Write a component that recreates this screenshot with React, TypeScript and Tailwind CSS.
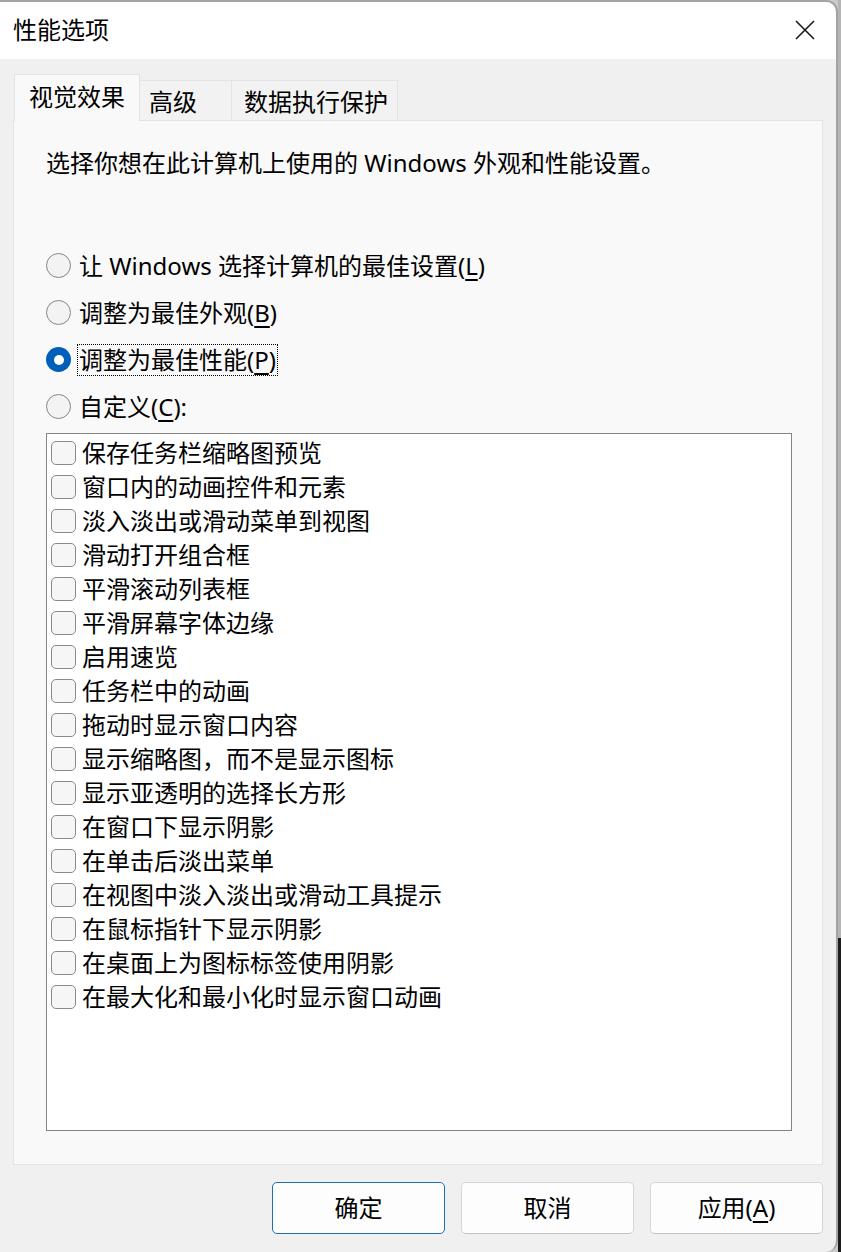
import React from "react";

const items = [
  "保存任务栏缩略图预览",
  "窗口内的动画控件和元素",
  "淡入淡出或滑动菜单到视图",
  "滑动打开组合框",
  "平滑滚动列表框",
  "平滑屏幕字体边缘",
  "启用速览",
  "任务栏中的动画",
  "拖动时显示窗口内容",
  "显示缩略图，而不是显示图标",
  "显示亚透明的选择长方形",
  "在窗口下显示阴影",
  "在单击后淡出菜单",
  "在视图中淡入淡出或滑动工具提示",
  "在鼠标指针下显示阴影",
  "在桌面上为图标标签使用阴影",
  "在最大化和最小化时显示窗口动画",
];

function U({ children }: { children: React.ReactNode }) {
  return <span className="underline underline-offset-[4px] decoration-[1.5px]">{children}</span>;
}

function Radio({ checked, children, focus }: { checked?: boolean; children: React.ReactNode; focus?: boolean }) {
  return (
    <div className="h-[47px] flex items-center">
      {checked ? (
        <div className="w-[25px] h-[25px] rounded-full bg-[#005fb8] flex items-center justify-center shrink-0">
          <div className="w-[10px] h-[10px] rounded-full bg-white" />
        </div>
      ) : (
        <div className="w-[25px] h-[25px] rounded-full border-[1.5px] border-[#858585] bg-[#f3f3f3] shrink-0" />
      )}
      <div
        className={
          focus
            ? "ml-[6px] px-[1px] h-[32px] flex items-center border border-dotted border-black leading-[30px]"
            : "ml-[8px] h-[32px] flex items-center leading-[30px]"
        }
      >
        {children}
      </div>
    </div>
  );
}

export default function App() {
  return (
    <div className="w-[841px] h-[1252px] flex overflow-hidden bg-[#c9c9c9] text-[24px] text-black font-['Noto_Sans','Noto_Sans_CJK_SC',sans-serif]">
      <div className="w-[838px] h-full flex flex-col bg-[#f0f0f0] border-t-2 border-r-2 border-[#a3a3a3] rounded-tr-[12px] rounded-br-[12px] overflow-hidden shrink-0">
        {/* title bar */}
        <div className="h-[57px] bg-white flex items-center justify-between pl-[13px] pr-[21px] shrink-0">
          <div className="leading-[30px] -mt-[1px]">性能选项</div>
          <svg width="20" height="20" viewBox="0 0 20 20" className="-mt-[2px]">
            <path d="M1 1 L19 19 M19 1 L1 19" stroke="#1a1a1a" strokeWidth="1.6" fill="none" />
          </svg>
        </div>

        {/* body */}
        <div className="flex-1 flex flex-col px-[13px] pt-[16px]">
          {/* tabs */}
          <div className="flex items-end h-[46px] relative z-10 -mb-px">
            <div className="ml-px w-[126px] h-[47px] bg-[#f9f9f9] border-t border-l border-r border-[#e3e3e3] flex items-center pl-[14px] leading-[30px] pb-[2px]">
              视觉效果
            </div>
            <div className="w-[92px] h-[41px] bg-[#f2f2f2] border-t border-r border-b border-[#e3e3e3] flex items-center pl-[9px] leading-[30px] pt-[2px]">
              高级
            </div>
            <div className="w-[166px] h-[41px] bg-[#f2f2f2] border-t border-r border-b border-[#e3e3e3] flex items-center pl-[12px] leading-[30px] pt-[2px]">
              数据执行保护
            </div>
          </div>

          {/* panel */}
          <div className="h-[1045px] bg-[#f9f9f9] border border-[#e3e3e3] flex flex-col pl-[32px] pt-[26px] shrink-0">
            <div className="h-[32px] leading-[32px]">选择你想在此计算机上使用的 Windows 外观和性能设置。</div>

            <div className="mt-[63px] flex flex-col">
              <Radio>
                让 Windows 选择计算机的最佳设置(<U>L</U>)
              </Radio>
              <Radio>
                调整为最佳外观(<U>B</U>)
              </Radio>
              <Radio checked focus>
                调整为最佳性能(<U>P</U>)
              </Radio>
              <Radio>
                自定义(<U>C</U>):
              </Radio>
            </div>

            <div className="mt-[3px] w-[746px] h-[698px] bg-white border border-[#858585] pt-[2px] pl-[4px] flex flex-col">
              {items.map((t) => (
                <div key={t} className="h-[34px] flex items-center shrink-0">
                  <div className="w-[25px] h-[24px] rounded-[5px] border border-[#8a8a8a] bg-[#f6f6f6] shrink-0" />
                  <div className="ml-[6px] leading-[30px]">{t}</div>
                </div>
              ))}
            </div>
          </div>

          {/* buttons */}
          <div className="flex justify-end gap-[16px] mt-[17px]">
            <div className="w-[173px] h-[52px] rounded-[5px] border-[1.5px] border-[#1e6fb3] bg-[#fdfdfd] flex items-center justify-center leading-[30px]">
              确定
            </div>
            <div className="w-[173px] h-[52px] rounded-[5px] border border-[#d6d6d6] border-b-[#c2c2c2] bg-[#fdfdfd] flex items-center justify-center leading-[30px]">
              取消
            </div>
            <div className="w-[173px] h-[52px] rounded-[5px] border border-[#d6d6d6] border-b-[#c2c2c2] bg-[#fdfdfd] flex items-center justify-center leading-[30px]">
              应用(<U>A</U>)
            </div>
          </div>
        </div>
      </div>
      <div className="flex-1 flex flex-col">
        <div className="h-[938px] bg-[#b5b5b5]" />
        <div className="flex-1 bg-[#1c1c1c]" />
      </div>
    </div>
  );
}
